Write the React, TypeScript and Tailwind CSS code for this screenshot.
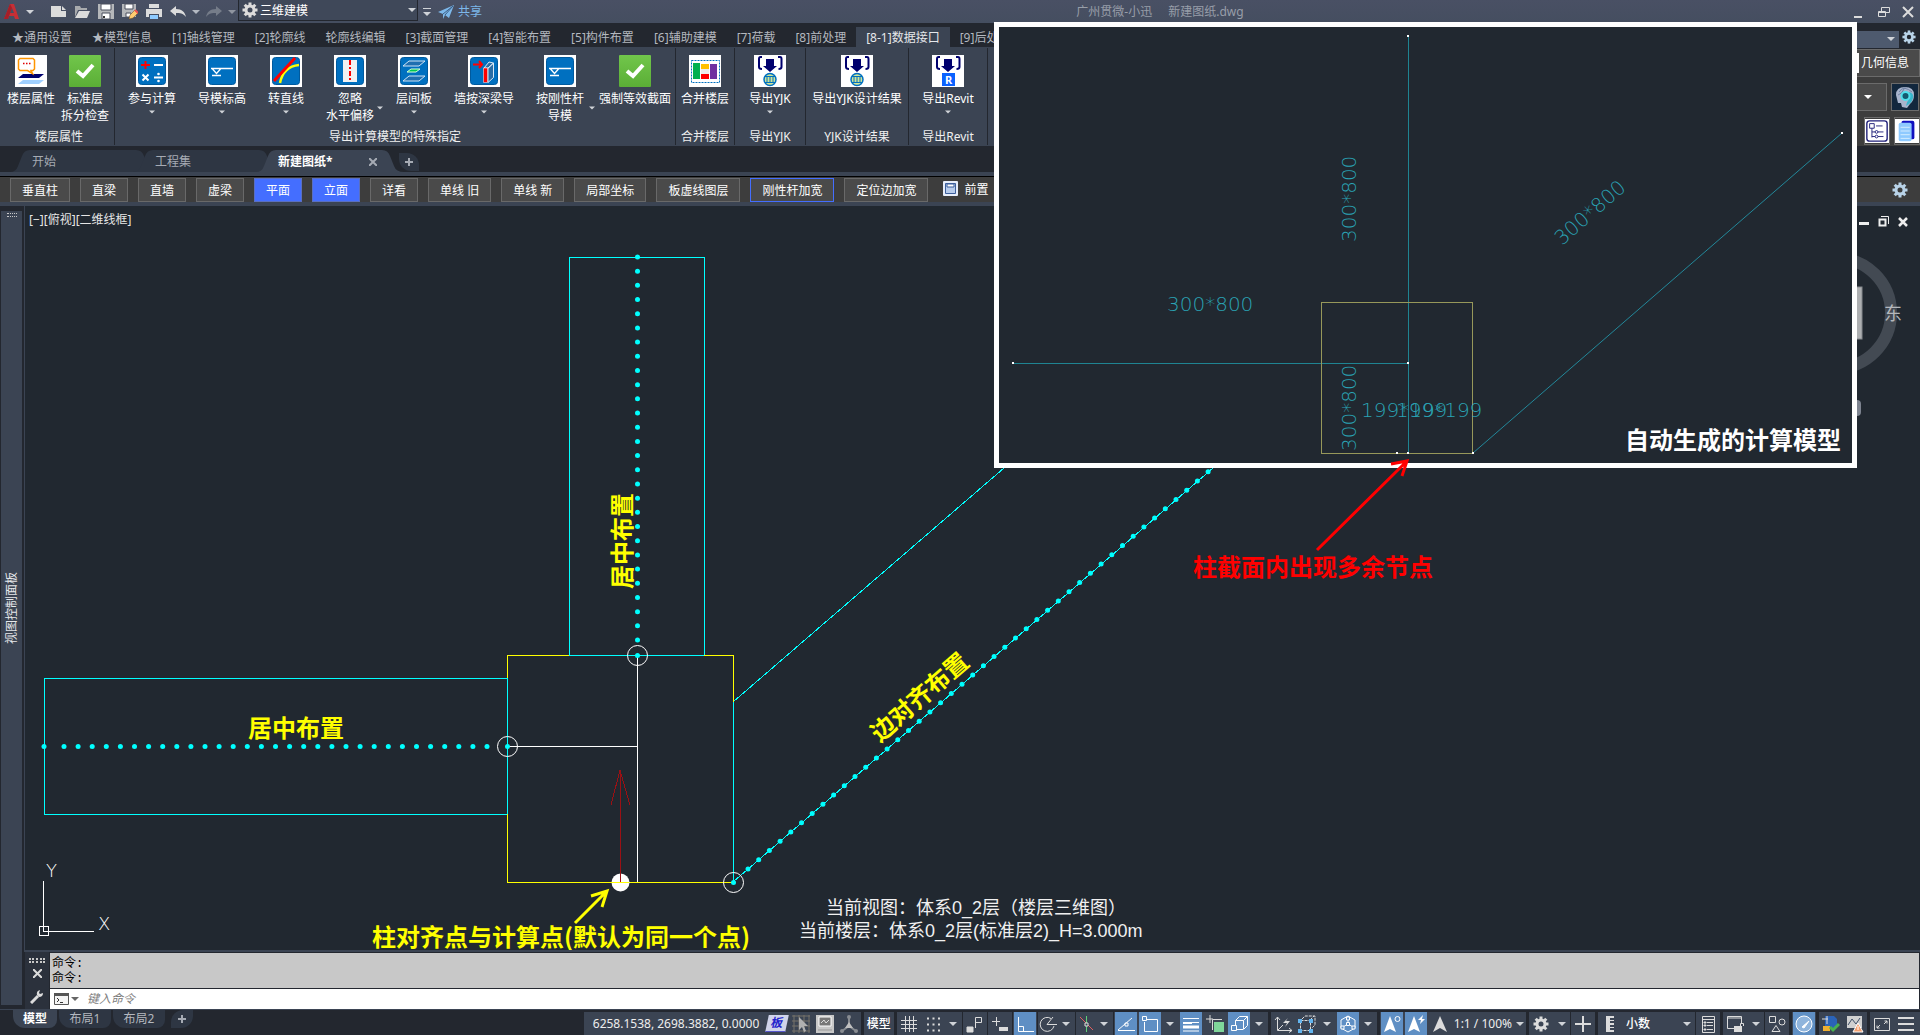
import type { ReactNode } from "react";
import { clsx } from "clsx";

const SANS = "font-['Noto_Sans','Noto_Sans_CJK_SC',sans-serif]";

interface RibbonButtonData {
  label: string[];
  icon: ReactNode;
  width: string;
  menu?: boolean;
}

interface RibbonPanelData {
  title: string;
  buttons: RibbonButtonData[];
}

interface ToolButtonData {
  label: string;
  active?: boolean;
  outlined?: boolean;
}

function Caret({ className = "border-t-[#d0d3d8]" }: { className?: string }) {
  return (
    <span
      aria-hidden="true"
      className={clsx("inline-block size-0 border-x-4 border-t-4 border-x-transparent", className)}
    />
  );
}

/* ---------- Icons ---------- */

const gearTeeth = [0, 45, 90, 135, 180, 225, 270, 315];

function Gear({ className, fill = "#dcdcdc" }: { className?: string; fill?: string }) {
  return (
    <svg viewBox="0 0 16 16" className={className} aria-hidden="true">
      <g fill={fill}>
        {gearTeeth.map((a) => (
          <rect key={a} x="6.5" y="0.5" width="3" height="4" transform={`rotate(${a} 8 8)`} />
        ))}
      </g>
      <circle cx="8" cy="8" r="4" fill="none" stroke={fill} strokeWidth="3" />
    </svg>
  );
}

function BlueTile({ children }: { children: ReactNode }) {
  return (
    <svg viewBox="0 0 32 32" className="size-8 bg-white" aria-hidden="true">
      <rect x="2.5" y="2.5" width="27" height="27" rx="3" fill="#0070c0" stroke="#005a9e" />
      {children}
    </svg>
  );
}

const checkIcon = (
  <svg viewBox="0 0 32 32" className="size-8" aria-hidden="true">
    <defs>
      <linearGradient id="check" x1="0" y1="0" x2="0" y2="1">
        <stop offset="0" stopColor="#71c64b" />
        <stop offset="1" stopColor="#5bae36" />
      </linearGradient>
    </defs>
    <rect width="32" height="32" rx="1" fill="url(#check)" />
    <path d="M8 16l6 5L24 10" fill="none" stroke="#fff" strokeWidth="4" />
  </svg>
);

const floorIcon = (
  <svg viewBox="0 0 32 32" className="size-8 bg-white" aria-hidden="true">
    <path d="M8 19h21l-5 4H3z" fill="#00006e" />
    <path d="M8 25h21l-5 4H3z" fill="#a0d0ff" />
    <path d="M5 3.500h13l1.500 1.500v9l-1.500 1.500h-2l1.500 3-5-3H5L3.500 14V5z" fill="#fff" stroke="#ff9500" strokeWidth="1.500" />
    <path d="M8 8.500h1.500M11 8.500h1.500M14 8.500h1.500" stroke="#e00000" strokeWidth="1.500" />
  </svg>
);

const calcIcon = (
  <BlueTile>
    <path d="M5 10h9M9.500 6v8" stroke="#ff0000" strokeWidth="2" />
    <path d="M18 10h9M18 22.500h9M6.500 19.500l6 6M12.500 19.500l-6 6" stroke="#fff" strokeWidth="2" />
    <circle cx="22.500" cy="19" r="1.300" fill="#fff" />
    <circle cx="22.500" cy="26" r="1.300" fill="#fff" />
  </BlueTile>
);

const elevationIcon = (
  <BlueTile>
    <path d="M5 13.500h22M6.500 14l4 4.500 4-4.500M6 20.500h9" fill="none" stroke="#fff" strokeWidth="1.300" />
  </BlueTile>
);

const straightIcon = (
  <BlueTile>
    <path d="M10 28C12 18 18 11 29 10" fill="none" stroke="#ffff00" strokeWidth="2.500" />
    <path d="M4 26L25 3" stroke="#ff0000" strokeWidth="3" />
  </BlueTile>
);

const offsetIcon = (
  <BlueTile>
    <path d="M9 5h14v22H9z" fill="#f2f2f2" />
    <path d="M16 5v22" stroke="#ff0000" strokeWidth="2" strokeDasharray="5 2 2 2" />
  </BlueTile>
);

const slabIcon = (
  <BlueTile>
    <path d="M11 6h16l-6 5H5zM11 21h16l-6 5H5z" fill="#1f6fb0" stroke="#cfe4f5" />
    <path d="M13 14h9l-4 3H9z" fill="#00c853" stroke="#d9ffd9" />
  </BlueTile>
);

const deepBeamIcon = (
  <BlueTile>
    <path d="M5 9.500h9M11 6l3 3.500-3 3.500" fill="none" stroke="#ff0000" strokeWidth="2" />
    <path d="M20 13v14.500l5.500-5V8zM16 13l5-6 4.500 1-5 5z" fill="#2b6ea5" stroke="#d9e8f5" />
    <path d="M15.500 13h4v14.500h-4z" fill="#ff0000" stroke="#fff" strokeWidth="0.500" />
  </BlueTile>
);

const mergeIcon = (
  <svg viewBox="0 0 32 32" className="size-8 bg-white" aria-hidden="true">
    <rect x="2.500" y="5.500" width="28" height="22" fill="none" stroke="#0070c0" strokeDasharray="2 1" />
    <path d="M4 8h7v16H4z" fill="#00b050" />
    <path d="M12 9h8v5h-8z" fill="#ffc000" />
    <path d="M12 14h8v5h-8z" fill="#eee" />
    <path d="M12 19h8v5h-8z" fill="#ff0000" />
    <path d="M21 9h7v15h-7z" fill="#7030a0" />
  </svg>
);

function ExportIcon({ revit }: { revit?: boolean }) {
  return (
    <svg viewBox="0 0 32 32" className="size-8 bg-white" aria-hidden="true">
      <path d="M8 2H6.500Q5 2 5 4v8q0 2 3 2M24 2h2q1.500 0 1.500 2v8q0 2-3 2" fill="none" stroke="#00006e" strokeWidth="2" />
      <path d="M12 4h8v7h3l-7 6-7-6h3z" fill="#00006e" />
      {revit ? (
        <>
          <rect x="10" y="18" width="13" height="13" fill="#0a62ff" />
          <text x="16.500" y="28.500" textAnchor="middle" fontSize="11" fontWeight="700" fill="#fff">
            R
          </text>
        </>
      ) : (
        <>
          <circle cx="16" cy="24.500" r="6" fill="#cfe59a" stroke="#0070c0" strokeWidth="1.500" />
          <path d="M11 21.500h10M11 27.500h10M13 21v7M16 21v7M19 21v7" stroke="#0070c0" />
        </>
      )}
    </svg>
  );
}

/* ---------- Title bar ---------- */

const quickTools: { label: string; art: ReactNode }[] = [
  { label: "新建", art: <path d="M1 3h10v5h5v6H1zM12 3l4 4h-4z" fill="#dcdcdc" /> },
  {
    label: "打开",
    art: (
      <>
        <path d="M1 3h5l1 2h6v2H4l-3 7z" fill="#a9abae" />
        <path d="M5 8h11l-3 7H1z" fill="#dcdcdc" />
      </>
    ),
  },
  {
    label: "保存",
    art: (
      <>
        <path d="M0 1h16v15H0z" fill="#b5b7ba" />
        <path d="M3 1h10v6H3zM4 10h8v6H4z" fill="#fff" stroke="#4a4f5c" />
        <path d="M5 13h2v2H5z" fill="#333" />
      </>
    ),
  },
  {
    label: "另存为",
    art: (
      <>
        <path d="M0 1h14v13H0z" fill="#b5b7ba" />
        <path d="M3 1h8v5H3zM4 10h5v4H4z" fill="#fff" stroke="#4a4f5c" />
        <path d="M7 16l1-4 5-5 3 3-5 5z" fill="#ffcc70" stroke="#6e4a20" strokeWidth="0.500" />
        <path d="M13 7l3 3" stroke="#f05050" strokeWidth="2" />
      </>
    ),
  },
  {
    label: "打印",
    art: (
      <>
        <path d="M3 1h10v4H3zM0 6h16v8h-3v-3H3v3H0z" fill="#dcdcdc" />
        <path d="M4 12h8v4H4z" fill="#8fcbff" />
      </>
    ),
  },
];

function QuickButton({ label, children }: { label: string; children: ReactNode }) {
  return (
    <button type="button" aria-label={label} className="flex size-6 items-center justify-center">
      <svg viewBox="0 0 16 17" className="h-[17px] w-4" aria-hidden="true">
        {children}
      </svg>
    </button>
  );
}

function TitleBar() {
  return (
    <header className="flex h-[23px] shrink-0 items-center bg-gradient-to-b from-[#495064] to-[#454e60]">
      <button type="button" aria-label="应用程序菜单" className="flex h-full w-[46px] items-center gap-1.5 pl-1">
        <svg viewBox="0 0 16 17" className="h-[17px] w-4" aria-hidden="true">
          <path d="M0 16L6 1h4l5 15h-4l-1-3H5l-1 3zM6 10h4L8 5z" fill="#c62f35" />
          <path d="M5 13L8 5 6 1 0 16h4z" fill="#a51f28" />
        </svg>
        <Caret />
      </button>
      {quickTools.map((t) => (
        <QuickButton key={t.label} label={t.label}>
          {t.art}
        </QuickButton>
      ))}
      <QuickButton label="放弃">
        <path d="M0 8l6-5v3c6 0 9 3 10 8-3-4-6-4-10-4v3z" fill="#dcdcdc" />
      </QuickButton>
      <span className="flex w-3 justify-center">
        <Caret className="border-t-[#b4b9c2]" />
      </span>
      <QuickButton label="重做">
        <path d="M16 8l-6-5v3C4 6 1 9 0 14c3-4 6-4 10-4v3z" fill="#757c89" />
      </QuickButton>
      <span className="flex w-3 justify-center">
        <Caret className="border-t-[#8f95a0]" />
      </span>
      <div className="flex h-[21px] w-[180px] items-center self-start border-x border-b border-[#23272f] bg-[#3f4859] pr-px pl-[3px]">
        <Gear className="size-4" />
        <select
          aria-label="工作空间"
          className="h-5 min-w-0 flex-1 appearance-none bg-transparent pt-0.5 pl-0.5 text-xs text-white outline-none"
        >
          <option>三维建模</option>
        </select>
        <Caret />
      </div>
      <button type="button" aria-label="自定义快速访问工具栏" className="flex w-[18px] flex-col items-center gap-[3px]">
        <span className="h-px w-2 bg-[#d0d3d8]" />
        <Caret />
      </button>
      <button type="button" className="ml-0.5 flex items-center gap-1 text-xs text-[#7db8ea]">
        <svg viewBox="0 0 16 14" className="h-3.5 w-4" aria-hidden="true">
          <path d="M0 7L16 0l-5 13-4-3-2 4V9z" fill="#7db8ea" />
          <path d="M5 9L15 1 7 10" stroke="#3d5f86" fill="none" />
        </svg>
        共享
      </button>
      <p className="flex flex-1 justify-center gap-4 pr-4 text-xs text-[#989ea9]">
        <span>广州贯微-小迅</span>
        <span>新建图纸.dwg</span>
      </p>
      <div className="flex items-center gap-3 pr-1.5">
        <button type="button" aria-label="最小化" className="flex h-4 w-3 items-end">
          <span className="mb-0.5 h-0.5 w-2 bg-[#dcdcdc]" />
        </button>
        <button type="button" aria-label="还原">
          <svg viewBox="0 0 12 12" className="size-3" fill="none" stroke="#dcdcdc" aria-hidden="true">
            <path d="M3.500 5V1.500h8v5H8M.500 5.500h7v5h-7zM.500 6.500h7" />
          </svg>
        </button>
        <button type="button" aria-label="关闭">
          <svg viewBox="0 0 12 12" className="size-3" stroke="#dcdcdc" strokeWidth="2" aria-hidden="true">
            <path d="M1 1l10 10M11 1L1 11" />
          </svg>
        </button>
      </div>
    </header>
  );
}

/* ---------- Ribbon ---------- */

const ribbonTabs = [
  "★通用设置",
  "★模型信息",
  "[1]轴线管理",
  "[2]轮廓线",
  "轮廓线编辑",
  "[3]截面管理",
  "[4]智能布置",
  "[5]构件布置",
  "[6]辅助建模",
  "[7]荷载",
  "[8]前处理",
  "[8-1]数据接口",
  "[9]后处理",
];

const ribbonPanels: RibbonPanelData[] = [
  {
    title: "楼层属性",
    buttons: [
      { label: ["楼层属性"], icon: floorIcon, width: "w-[52px]" },
      { label: ["标准层", "拆分检查"], icon: checkIcon, width: "w-14" },
    ],
  },
  {
    title: "导出计算模型的特殊指定",
    buttons: [
      { label: ["参与计算"], icon: calcIcon, width: "w-[72px]", menu: true },
      { label: ["导模标高"], icon: elevationIcon, width: "w-[68px]", menu: true },
      { label: ["转直线"], icon: straightIcon, width: "w-[60px]", menu: true },
      { label: ["忽略", "水平偏移"], icon: offsetIcon, width: "w-[68px]", menu: true },
      { label: ["层间板"], icon: slabIcon, width: "w-[60px]", menu: true },
      { label: ["墙按深梁导"], icon: deepBeamIcon, width: "w-20", menu: true },
      { label: ["按刚性杆", "导模"], icon: elevationIcon, width: "w-[72px]", menu: true },
      { label: ["强制等效截面"], icon: checkIcon, width: "w-[78px]" },
    ],
  },
  { title: "合并楼层", buttons: [{ label: ["合并楼层"], icon: mergeIcon, width: "w-14" }] },
  { title: "导出YJK", buttons: [{ label: ["导出YJK"], icon: <ExportIcon />, width: "w-[68px]", menu: true }] },
  { title: "YJK设计结果", buttons: [{ label: ["导出YJK设计结果"], icon: <ExportIcon />, width: "w-[100px]" }] },
  { title: "导出Revit", buttons: [{ label: ["导出Revit"], icon: <ExportIcon revit />, width: "w-[76px]", menu: true }] },
];

function RibbonButton({ label, icon, width, menu }: RibbonButtonData) {
  const twoLines = label.length > 1;
  return (
    <button
      type="button"
      className={clsx("relative flex flex-col items-center text-xs leading-[17px] whitespace-nowrap text-white", width)}
    >
      {icon}
      <span className="mt-[3px]">{label[0]}</span>
      {twoLines && <span>{label[1]}</span>}
      {menu && !twoLines && <Caret className="mt-[3px] scale-75 border-t-[#d0d3d8]" />}
      {menu && twoLines && <Caret className="absolute top-[51px] right-0 scale-75 border-t-[#d0d3d8]" />}
    </button>
  );
}

function Ribbon() {
  return (
    <div className="flex min-w-0 flex-1 flex-col">
      <nav className="flex h-6 items-end overflow-hidden bg-[#23272f] pl-0.5">
        {ribbonTabs.map((tab) => (
          <button
            key={tab}
            type="button"
            className={clsx(
              "h-5 shrink-0 px-[10px] text-xs leading-[21px] whitespace-nowrap",
              tab === "[8-1]数据接口" ? "bg-[#3b4453] text-[#e6e8eb]" : "text-[#b4b8bf]",
            )}
          >
            {tab}
          </button>
        ))}
      </nav>
      <div className="flex h-[99px] bg-[#3b4453] pt-px pl-1">
        {ribbonPanels.map((panel) => (
          <section
            key={panel.title}
            className="mb-px flex flex-col justify-between border-r border-[#23272f] px-px pt-[7px]"
          >
            <div className="flex">
              {panel.buttons.map((button) => (
                <RibbonButton key={button.label.join()} {...button} />
              ))}
            </div>
            <h2 className="text-center text-xs leading-4 text-[#f0f0f0]">{panel.title}</h2>
          </section>
        ))}
      </div>
    </div>
  );
}

function SidePalette() {
  return (
    <aside className="flex w-20 shrink-0 flex-col bg-[#3d3d3d]">
      <div className="flex h-[26px] items-center gap-[3px] bg-[#23272f] pt-1.5 pr-1">
        <button type="button" aria-label="搜索选项" className="flex h-[17px] flex-1 items-center justify-end bg-[#4e5a6e] pr-1">
          <Caret />
        </button>
        <Gear className="mb-1 size-3.5" fill="#b9d3e8" />
      </div>
      <div className="flex flex-col gap-1.5">
        <div className="flex h-7 items-center border-y border-r border-[#6b6b6b] bg-[#4a4a4a]">
          <input aria-label="构件编号" type="text" className="h-5 w-[19px] bg-white" />
          <button type="button" className="flex-1 pl-0.5 text-left text-xs whitespace-nowrap text-white">
            几何信息
          </button>
        </div>
        <div className="flex h-7 justify-between pr-px">
          <button
            type="button"
            aria-label="选项"
            className="flex w-[47px] items-center justify-end border border-[#6b6b6b] bg-[#4a4a4a] pr-3.5"
          >
            <Caret className="border-t-white" />
          </button>
          <button type="button" aria-label="智能助手" className="border border-[#6b6b6b]">
            <svg viewBox="0 0 26 26" className="size-[26px] bg-[#12273d]" aria-hidden="true">
              <path d="M4 11q0-8 9-8 9 0 9 8 0 6-4 9l-3 4-5-1-1-4H6l-1-4z" fill="#a8b4cc" />
              <path d="M7 8q2-4 7-4M6 11q4-1 6-6M12 4q5 1 8 4" fill="none" stroke="#6f83a5" />
              <path d="M17 8q5 1 4 6-1 4-4 6l-3 2q1-5 4-8z" fill="#39b5cc" />
              <circle cx="13.500" cy="12" r="4" fill="#155a70" stroke="#4fe0ec" strokeWidth="2" />
            </svg>
          </button>
        </div>
        <div className="flex h-7 justify-end gap-1">
          <button type="button" aria-label="列表设置" className="flex w-[26px] items-center justify-center border border-[#6b6b6b]">
            <svg viewBox="0 0 26 26" className="size-6 bg-white" fill="none" stroke="#20207a" aria-hidden="true">
              <rect x="2" y="2" width="22" height="22" rx="3" strokeWidth="1.500" />
              <path d="M5 5h5v5H5zM12 7.500h7M7.500 10v10M7.500 14H11M14 14h6M7.500 19H11M14 19h6" />
              <circle cx="12.500" cy="14" r="1.500" />
              <circle cx="12.500" cy="19" r="1.500" />
            </svg>
          </button>
          <button type="button" aria-label="文档" className="flex w-[26px] items-center justify-center border border-[#6b6b6b]">
            <svg viewBox="0 0 26 26" className="size-6 bg-white" aria-hidden="true">
              <rect x="7" y="2" width="14" height="20" rx="2" fill="#1010c0" />
              <rect x="4" y="4" width="14" height="20" rx="2" fill="#8fcaff" />
              <path d="M6 9h10M6 13h10M6 17h10M6 21h10" stroke="#d9efff" />
            </svg>
          </button>
        </div>
      </div>
    </aside>
  );
}

/* ---------- File tabs and tool strip ---------- */

function FileTab({ label, active }: { label: string; active?: boolean }) {
  return (
    <div className={clsx("relative w-[123px] px-2.5", active ? "z-10" : "z-0")}>
      <svg
        viewBox="0 0 148 22"
        className={clsx("absolute bottom-0 -left-3 h-[22px] w-[148px]", active ? "fill-[#3b4453]" : "fill-[#2e3643]")}
        aria-hidden="true"
      >
        <path d="M0 22q6 0 8-6l4-10q2-6 8-6h106q6 0 8 6l4 10q2 6 10 6z" />
      </svg>
      <div className="relative flex h-full items-center justify-between pt-0.5">
        <button type="button" className={clsx("text-xs", active ? "font-bold text-white" : "text-[#a6abb4]")}>
          {label}
        </button>
        {active && (
          <button type="button" aria-label={`关闭 ${label}`} className="mr-1">
            <svg viewBox="0 0 8 8" className="size-2" stroke="#a6abb4" strokeWidth="2" aria-hidden="true">
              <path d="M0 0l8 8M8 0L0 8" />
            </svg>
          </button>
        )}
      </div>
    </div>
  );
}

function FileTabs() {
  return (
    <div className="h-[30px] shrink-0 border-b-4 border-[#3b4453] bg-[#23272f]">
      <nav className="flex h-full pt-1 pl-[22px]">
        <FileTab label="开始" />
        <FileTab label="工程集" />
        <FileTab label="新建图纸*" active />
        <button
          type="button"
          aria-label="新建选项卡"
          className="mt-0.5 ml-2 flex h-[18px] w-5 items-center justify-center self-center rounded-tr-xl rounded-bl-xl bg-[#2e3643]"
        >
          <svg viewBox="0 0 8 8" className="size-2" stroke="#a6abb4" strokeWidth="2" aria-hidden="true">
            <path d="M4 0v8M0 4h8" />
          </svg>
        </button>
      </nav>
    </div>
  );
}

const toolButtons: ToolButtonData[] = [
  { label: "垂直柱" },
  { label: "直梁" },
  { label: "直墙" },
  { label: "虚梁" },
  { label: "平面", active: true },
  { label: "立面", active: true },
  { label: "详看" },
  { label: "单线 旧" },
  { label: "单线 新" },
  { label: "局部坐标" },
  { label: "板虚线图层" },
  { label: "刚性杆加宽", outlined: true },
  { label: "定位边加宽" },
];

function ToolStrip() {
  return (
    <div className="flex h-[30px] shrink-0 items-start gap-[10px] border-t border-b-4 border-t-black border-b-[#3b4453] bg-[#3d3d3d] pt-px pr-3 pl-[10px]">
      {toolButtons.map((tool) => (
        <button
          key={tool.label}
          type="button"
          className={clsx(
            "h-6 shrink-0 border px-[11px] pt-px text-xs whitespace-nowrap text-white",
            tool.active ? "border-[#5a6fc0] bg-[#446eff]" : "bg-[#4a4a4a]",
            tool.outlined && "border-[#446eff]",
            !tool.active && !tool.outlined && "border-[#696969]",
          )}
        >
          {tool.label}
        </button>
      ))}
      <button type="button" className="ml-[5px] flex h-6 items-center gap-1.5 text-xs whitespace-nowrap text-white">
        <svg viewBox="0 0 15 15" className="mb-1 size-[15px]" aria-hidden="true">
          <rect width="15" height="15" rx="1" fill="#e8eefa" />
          <path d="M2.500 2.500h10v10h-10z" fill="#b8ccec" stroke="#3c5f9c" />
          <path d="M4 3h7v3H4z" fill="#fff" stroke="#3c5f9c" />
        </svg>
        前置
      </button>
      <button type="button" aria-label="设置" className="mt-1 ml-auto">
        <Gear className="size-4" fill="#b9d3e8" />
      </button>
    </div>
  );
}

/* ---------- Drawing ---------- */

const verticalDots = Array.from({ length: 28 }, (_, i) => 257 + (i * 383) / 27);
const horizontalDots = [44, ...Array.from({ length: 31 }, (_, i) => 64 + (i * 423) / 30)];
const diagonalDots = Array.from({ length: 44 }, (_, i) => ({
  x: 748 + i * 10.7,
  y: 869 - i * 9.24,
}));

function DrawingCanvas() {
  return (
    <svg className="absolute inset-0 h-full w-full" aria-label="结构平面图">
      <g transform="translate(-25 -206)" fill="none">
        <g stroke="#00ffff" shapeRendering="crispEdges">
          <path d="M569 655V257h135v398M507 678H44v136h463" />
          <path d="M733 702l271-234M733 882l480-414" />
        </g>
        <rect x="507" y="655" width="226" height="227" stroke="#ffff00" shapeRendering="crispEdges" />
        <path d="M569 655h135M507 678v136M733 702v180" stroke="#00ffff" shapeRendering="crispEdges" />
        <path d="M637 655v227M507 746h130" stroke="#ffffff" shapeRendering="crispEdges" />

        <g fill="#00ffff">
          {verticalDots.map((y) => (
            <circle key={y} cx="637.500" cy={y} r="2.500" />
          ))}
          {horizontalDots.map((x) => (
            <circle key={x} cx={x} cy="746.500" r="2.500" />
          ))}
          {diagonalDots.map((p) => (
            <circle key={p.x} cx={p.x} cy={p.y} r="2.500" />
          ))}
          <circle cx="637.500" cy="655.500" r="2.500" />
          <circle cx="507.500" cy="746.500" r="2.500" />
          <circle cx="733.500" cy="882.500" r="2.500" />
        </g>
        <g stroke="#ffffff">
          <circle cx="637.500" cy="655.500" r="10" />
          <circle cx="507.500" cy="746.500" r="10" />
          <circle cx="733.500" cy="882.500" r="10" />
        </g>

        {/* column anchor */}
        <circle cx="620.500" cy="882.500" r="9" fill="#ffffff" />
        <path d="M611 882.500h18" stroke="#ffff00" />
        <path d="M620 882V770M620 770l-9 35M620 770l10 35" stroke="#9a1014" shapeRendering="crispEdges" />
        <path d="M575 923l31-31M591 896l16-5-5 16" stroke="#ffff00" strokeWidth="3" />

        <g fill="#ffff00" fontSize="24" className="font-['Noto_Sans_CJK_SC',sans-serif] font-bold">
          <text x="248" y="737">居中布置</text>
          <text transform="translate(631 589) rotate(-90)">居中布置</text>
          <text transform="translate(880 743) rotate(-41)">边对齐布置</text>
          <text x="372" y="946">柱对齐点与计算点(默认为同一个点)</text>
        </g>

        <g fill="#f0f0f0" fontSize="18" className="font-['Liberation_Sans','Noto_Sans_CJK_SC',sans-serif]">
          <text x="826" y="914">当前视图：体系0_2层（楼层三维图）</text>
          <text x="799" y="937">当前楼层：体系0_2层(标准层2)_H=3.000m</text>
        </g>

        {/* ucs */}
        <g stroke="#ffffff" shapeRendering="crispEdges">
          <path d="M43 881v50h51M39 926h9v9h-9z" />
        </g>
        <g fill="#ffffff" fontSize="18" className="font-['DejaVu_Sans',sans-serif] font-extralight">
          <text x="46" y="877">Y</text>
          <text x="98" y="930">X</text>
        </g>
      </g>
    </svg>
  );
}

function ViewCube() {
  return (
    <div className="absolute top-[46px] right-[18px] flex flex-col items-end" aria-label="导航">
      <svg viewBox="0 0 130 170" className="h-[170px] w-[130px]" aria-hidden="true">
        <circle cx="64" cy="61" r="55" fill="none" stroke="#434a53" strokeWidth="12" />
        <rect x="38" y="35" width="52" height="52" fill="#aeb0b2" stroke="#85888c" />
        <rect x="70" y="148" width="19" height="16" rx="4" fill="#7e8490" />
        <text x="112" y="68" fontSize="18" fill="#b4b7bb" className="font-['Noto_Sans_CJK_SC',sans-serif]">
          东
        </text>
      </svg>
    </div>
  );
}

function Viewport() {
  return (
    <main className="relative min-w-0 flex-1 overflow-hidden bg-[#212830]">
      <DrawingCanvas />
      <p className="absolute top-1.5 left-1 text-xs text-[#e6e6e6]">[−][俯视][二维线框]</p>
      <div className="absolute top-[10px] right-3 flex items-center gap-[9px] text-white">
        <button type="button" aria-label="最小化视口" className="flex h-[11px] items-end pb-0.5">
          <span className="h-[3px] w-[10px] bg-[#eeeeee]" />
        </button>
        <button type="button" aria-label="还原视口">
          <svg viewBox="0 0 11 11" className="size-[11px]" fill="none" stroke="#eeeeee" aria-hidden="true">
            <path d="M3 .5h7.500V8" />
            <path d="M1.500 3.500h6v6h-6z" strokeWidth="2" />
          </svg>
        </button>
        <button type="button" aria-label="关闭视口">
          <svg viewBox="0 0 10 10" className="size-[10px]" stroke="#eeeeee" strokeWidth="2.500" aria-hidden="true">
            <path d="M1 1l8 8M9 1L1 9" />
          </svg>
        </button>
      </div>
      <ViewCube />
    </main>
  );
}

function ModelInset() {
  return (
    <figure className="absolute top-[22px] right-[63px] left-[994px] z-20 h-[446px] border-5 border-white bg-[#212830]">
      <svg className="h-full w-full overflow-visible" aria-label="计算模型">
        <g transform="translate(-999 -27)" fill="none">
          <path d="M1408 35v418M1013 363h395" stroke="#1f8492" shapeRendering="crispEdges" />
          <path d="M1473 453l369-320" stroke="#23889a" />
          <rect x="1321" y="302" width="151" height="151" stroke="#97985a" shapeRendering="crispEdges" />
          <path
            d="M1407 35h2v2h-2zM1012 362h2v2h-2zM1407 362h2v2h-2zM1841 132h2v2h-2zM1407 452h2v2h-2zM1396 452h2v2h-2zM1472 452h2v2h-2z"
            fill="#ffffff"
          />
          <g fill="#2aa3b4" fontSize="20" className="font-['DejaVu_Sans',sans-serif] font-extralight">
            <text x="1167" y="311">300*800</text>
            <text transform="translate(1356 242) rotate(-90)">300*800</text>
            <text transform="translate(1356 451) rotate(-90)">300*800</text>
            <text transform="translate(1562 246) rotate(-41)">300*800</text>
            <text x="1361" y="417">199*199</text>
            <text x="1396" y="417">199*199</text>
          </g>
          <g fontSize="24" className="font-['Noto_Sans_CJK_SC',sans-serif] font-bold">
            <text x="1625" y="449" fill="#ffffff">
              自动生成的计算模型
            </text>
            <text x="1193" y="576" fill="#ff0000">
              柱截面内出现多余节点
            </text>
          </g>
          <path d="M1317 550l89-88M1391 464l16-3-5 15" stroke="#ff0000" strokeWidth="3" />
        </g>
      </svg>
    </figure>
  );
}

/* ---------- Command line ---------- */

function CommandLine() {
  return (
    <section className="flex h-[59px] shrink-0 border-t-2 border-[#3b4453] bg-[#23272f] pl-px">
      <div className="flex w-6 flex-col items-center gap-1.5 bg-[#2b313c] pt-1.5">
        <span aria-hidden="true" className="h-[5px] w-4 border-y-2 border-dotted border-[#c8c8c8]" />
        <button type="button" aria-label="关闭命令行">
          <svg viewBox="0 0 9 9" className="size-[9px]" stroke="#dcdcdc" strokeWidth="2" aria-hidden="true">
            <path d="M0 0l9 9M9 0L0 9" />
          </svg>
        </button>
        <button type="button" aria-label="自定义" className="mt-1.5">
          <svg viewBox="0 0 14 14" className="size-3.5" aria-hidden="true">
            <path d="M1 13l7-7" stroke="#dcdcdc" strokeWidth="3" />
            <path d="M13 3l-3 1-1-1 1-3q-4 1-3 5l2 2q4 0 4-4z" fill="#dcdcdc" />
          </svg>
        </button>
      </div>
      <div className="flex min-w-0 flex-1 flex-col pt-px pr-px pl-px">
        <div className="h-[35px] bg-[#c8c8c8] pt-1 pl-0.5 font-['Liberation_Mono','Noto_Sans_CJK_SC',monospace] text-xs leading-[15px] text-black">
          <p>命令:</p>
          <p>命令:</p>
        </div>
        <div className="mt-px flex flex-1 items-center bg-white pl-1">
          <svg viewBox="0 0 15 12" className="h-3 w-[15px] shrink-0" aria-hidden="true">
            <path d="M.500 .500h14v11H.500z" fill="#f4f4f4" stroke="#555" />
            <path d="M0 0h15v3H0z" fill="#555" />
            <path d="M3 5l2 2-2 2M6 9.500h3" fill="none" stroke="#333" />
          </svg>
          <Caret className="mx-0.5 border-t-[#666666]" />
          <input
            aria-label="命令"
            type="text"
            placeholder="键入命令"
            className="ml-1.5 w-full bg-transparent text-xs text-black italic outline-none placeholder:text-[#7d7d7d]"
          />
        </div>
      </div>
    </section>
  );
}

/* ---------- Status bar ---------- */

function StatusIcon({
  label,
  on,
  narrow,
  children,
}: {
  label: string;
  on?: boolean;
  narrow?: boolean;
  children: ReactNode;
}) {
  return (
    <button
      type="button"
      aria-label={label}
      aria-pressed={on}
      className={clsx(
        "flex h-full shrink-0 items-center justify-center",
        on && "mx-px w-[22px] bg-[#5f8fc4]",
        !on && (narrow ? "w-5" : "w-6"),
      )}
    >
      <svg viewBox="0 0 18 18" className="size-[18px]" fill="none" stroke={on ? "#ffffff" : "#dcdcdc"} aria-hidden="true">
        {children}
      </svg>
    </button>
  );
}

function StatusMenu({ label }: { label: string }) {
  return (
    <button type="button" aria-label={label} className="flex h-full w-[17px] shrink-0 items-center justify-center">
      <Caret />
    </button>
  );
}

function Gap({ thin }: { thin?: boolean }) {
  return <span aria-hidden="true" className={clsx("h-full shrink-0 bg-[#23272f]", thin ? "w-px" : "w-[3px]")} />;
}

const layoutTabs = ["模型", "布局1", "布局2"];

function StatusBar() {
  return (
    <footer className="flex h-[26px] shrink-0 justify-between overflow-hidden border-t border-[#3b4453] bg-[#23272f]">
      <nav className="flex h-[18px] gap-0.5 pl-[13px]">
        {layoutTabs.map((tab, i) => (
          <button
            key={tab}
            type="button"
            className={clsx(
              "rounded-br-lg rounded-bl-xl text-xs leading-[18px]",
              i === 0 ? "w-11 bg-[#3b4453] font-bold text-white" : "w-[52px] bg-[#2e3643] text-[#b4b8bf]",
            )}
          >
            {tab}
          </button>
        ))}
        <button
          type="button"
          aria-label="新建布局"
          className="ml-1 flex w-[22px] items-center justify-center rounded-tl-xl rounded-br-xl bg-[#2e3643]"
        >
          <svg viewBox="0 0 8 8" className="size-2" stroke="#a6abb4" strokeWidth="2" aria-hidden="true">
            <path d="M4 0v8M0 4h8" />
          </svg>
        </button>
      </nav>
      <div className="mt-0.5 flex items-center bg-[#3b4453] pr-0.5 text-xs text-[#eeeeee]">
        <output className="w-[181px] pl-[9px] whitespace-nowrap">6258.1538, 2698.3882, 0.0000</output>
        <button type="button" className="flex w-6 shrink-0 items-center justify-center">
          <span className="-skew-x-12 border-b border-[#5555cc] bg-[#d0d4ea] px-1 text-xs leading-4 font-bold text-[#2222cc]">
            板
          </span>
        </button>
        <StatusIcon label="选择">
          <path d="M0 1h18M0 6h18M0 11h18M0 16h18M2 0v18M7 0v18M12 0v18M17 0v18" stroke="#77736a" />
          <path d="M7 2v13l3-3 2 5 2-1-2-5h4z" fill="#b0b0b0" stroke="none" />
        </StatusIcon>
        <StatusIcon label="面板">
          <path d="M0 0h18v18H0z" fill="#c8c8c8" stroke="none" />
          <path d="M3 2h12v9H3z" fill="#777" stroke="#fff" />
          <path d="M5 8l3-3 2 3 3-3" />
          <path d="M2 15h14" stroke="#999" />
        </StatusIcon>
        <StatusIcon label="节点">
          <path d="M9 3v8M9 11l-7 5M9 11l7 5" stroke="#888c92" strokeWidth="2" />
          <path d="M5 13l4-6 4 6z" fill="#c0c0c0" stroke="none" />
          <circle cx="9" cy="2" r="2" fill="#888c92" stroke="none" />
          <circle cx="2" cy="16" r="2" fill="#888c92" stroke="none" />
          <circle cx="16" cy="16" r="2" fill="#888c92" stroke="none" />
        </StatusIcon>
        <Gap />
        <button type="button" className="w-[30px] shrink-0 font-medium text-white">
          模型
        </button>
        <Gap />
        <StatusIcon label="栅格">
          <path d="M1 5.500h16M1 9.500h16M1 13.500h16M5.500 1v16M9.500 1v16M13.500 1v16" />
        </StatusIcon>
        <StatusIcon label="捕捉">
          <path d="M3 3.500h14M3 9.500h14M3 15.500h14" strokeWidth="2" strokeDasharray="2 3.500" />
        </StatusIcon>
        <StatusMenu label="捕捉选项" />
        <Gap thin />
        <StatusIcon label="推断约束">
          <path d="M1 12h6v5H1z" fill="#dcdcdc" />
          <path d="M9.500 13V2.500h6v5h-6" />
        </StatusIcon>
        <Gap thin />
        <StatusIcon label="动态输入">
          <path d="M1 6.500h8M5.500 2v9" />
          <path d="M8 12h9v4H8z" fill="#dcdcdc" stroke="none" />
        </StatusIcon>
        <Gap thin />
        <StatusIcon label="正交" on>
          <path d="M2.500 2v14.500H18M2.500 11.500h5v5" />
        </StatusIcon>
        <Gap thin />
        <StatusIcon label="极轴追踪" narrow>
          <path d="M12 3.500A7 7 0 1 0 15 11M8 9.500h10M8 9.500L14 2" />
        </StatusIcon>
        <StatusMenu label="极轴选项" />
        <Gap thin />
        <StatusIcon label="等轴测草图" narrow>
          <path d="M9.500 1v16" stroke="#5fd07a" />
          <path d="M3 2l13 13" stroke="#e06060" />
          <path d="M8 8h3v3H8z" fill="#3b4453" />
        </StatusIcon>
        <StatusMenu label="等轴测选项" />
        <Gap thin />
        <StatusIcon label="对象捕捉追踪" on>
          <path d="M1 15.500h17M1 15L15 3M8 8h3v3H8z" />
        </StatusIcon>
        <StatusIcon label="二维对象捕捉" on>
          <path d="M6 4.500h10.500v12h-13V7M1.500 1.500h4v4h-4z" />
        </StatusIcon>
        <StatusMenu label="对象捕捉选项" />
        <StatusIcon label="线宽" on>
          <path d="M1 3.500h16" />
          <path d="M1 8h9" strokeWidth="2" />
          <path d="M10 7.500h7M1 16h16" />
          <path d="M1 12h16" strokeWidth="3" />
        </StatusIcon>
        <StatusIcon label="选择循环">
          <path d="M0 4h7M4 0v8M16 4.500H6.500V15" />
          <path d="M8 7h10v10H8z" fill="#7fd69a" stroke="none" />
        </StatusIcon>
        <StatusIcon label="三维对象捕捉" on>
          <path d="M5.500 10V5.500h8V14M5.500 5.500l4-4h8l-4 4M17.500 1.500v9l-4 4M7 14.500h6M1.500 10.500h5v5h-5z" />
        </StatusIcon>
        <StatusMenu label="三维捕捉选项" />
        <Gap />
        <StatusIcon label="动态 UCS">
          <path d="M3.500 2v13.500H18M1 5l2.500-3L6 5M15 13l3 2.500-3 2M4 15l5-5" />
          <path d="M14 3l-5 5h4l-2 4 5-6h-4z" fill="#dcdcdc" stroke="none" />
        </StatusIcon>
        <StatusIcon label="选择过滤">
          <path d="M2.500 5.500h10v10h-10zM4 4l3-3h10v9l-3 3M12 5l4-4" strokeDasharray="3 1" />
          <path d="M0 4h4v4H0zM11 4h4v4h-4zM0 14h4v4H0zM11 14h4v4h-4z" fill="#62b5f0" stroke="none" />
        </StatusIcon>
        <StatusMenu label="过滤选项" />
        <StatusIcon label="小控件" on>
          <path d="M9 1l7 4v8l-7 4-7-4V5zM9 1v8M9 9l7 4M9 9l-7 4" />
          <path d="M7.500 7.500h3v3h-3zM7.500 2h3v3h-3zM2 11h3v3H2zM13 11h3v3h-3z" fill="#5f8fc4" />
        </StatusIcon>
        <StatusMenu label="小控件选项" />
        <Gap />
        <StatusIcon label="注释可见性" on>
          <path d="M7 1l6 16-6-3-6 3z" fill="#fff" stroke="none" />
          <circle cx="14.500" cy="4" r="2.500" />
        </StatusIcon>
        <StatusIcon label="自动缩放" on>
          <path d="M7 1l6 16-6-3-6 3z" fill="#fff" stroke="none" />
          <path d="M16 0l-5 5h3l-1 4 5-5h-3z" fill="#fff" stroke="none" />
        </StatusIcon>
        <StatusIcon label="注释比例">
          <path d="M9 1l7 16-7-4-7 4z" fill="#dcdcdc" stroke="none" />
        </StatusIcon>
        <button type="button" className="flex h-full shrink-0 items-center gap-1 px-0.5 whitespace-nowrap">
          1:1 / 100%
          <Caret />
        </button>
        <Gap />
        <button type="button" aria-label="切换工作空间" className="flex h-full w-6 shrink-0 items-center justify-center">
          <Gear className="size-4" />
        </button>
        <StatusMenu label="工作空间选项" />
        <Gap thin />
        <StatusIcon label="注释监视器">
          <path d="M1 9h16M9 1v16" strokeWidth="2" />
        </StatusIcon>
        <Gap />
        <StatusIcon label="单位">
          <path d="M5 1h8v2H9v2h4v1H9v2h4v2H9v2h4v1H9v2h4v2H5z" fill="#dcdcdc" stroke="none" />
        </StatusIcon>
        <div className="flex h-full shrink-0 items-center">
          <select
            aria-label="图形单位"
            className="w-14 appearance-none bg-transparent pl-1 font-medium text-white outline-none"
          >
            <option>小数</option>
          </select>
          <span className="flex w-[17px] justify-center">
            <Caret />
          </span>
        </div>
        <Gap thin />
        <StatusIcon label="快捷特性">
          <path d="M3.500 1.500h12v16h-12zM3 4.500h12M8 7.500h6M8 10.500h6M8 14.500h6" />
          <path d="M5 7h2v1H5zM5 10h2v1H5zM5 14h2v1H5z" fill="#dcdcdc" />
        </StatusIcon>
        <Gap />
        <StatusIcon label="锁定用户界面">
          <path d="M8 13.500H1.500v-12h14V9M1 3h15" />
          <path d="M8 11h8v6H8z" fill="#dcdcdc" stroke="none" />
          <path d="M14.500 11V8.500h3V11" />
        </StatusIcon>
        <StatusMenu label="锁定选项" />
        <Gap thin />
        <StatusIcon label="隔离对象">
          <path d="M1.500 1.500h6v6h-6zM4 16.500l4-6 4 6z" />
          <circle cx="14" cy="7" r="3" />
        </StatusIcon>
        <Gap />
        <StatusIcon label="硬件加速" on>
          <circle cx="9" cy="9" r="8" fill="#8fb4dc" />
          <path d="M7 12l7-6-5 7z" fill="#fff" />
        </StatusIcon>
        <Gap />
        <StatusIcon label="标准检查">
          <path d="M3 1h9l3 3v9H3z" fill="#2a63b8" stroke="none" />
          <path d="M0 4h6M5 1v8" />
          <path d="M1 11h7v5H1z" fill="#f0b030" stroke="none" />
          <path d="M8 12l3 3 6-6" stroke="#48b050" strokeWidth="3" />
        </StatusIcon>
        <StatusIcon label="性能监视">
          <path d="M1 1h15v12H1z" fill="#d0d0d0" stroke="none" />
          <path d="M2 10l4-6 4 5 4-6" stroke="#405068" />
          <path d="M12 8l5 9H7z" fill="#f4a070" stroke="#fff" />
          <path d="M12 11v4" stroke="#fff" />
        </StatusIcon>
        <Gap />
        <StatusIcon label="全屏显示">
          <path d="M1.500 3.500h15v12h-15zM4 13l3-3M4 10.500V13h2.500M14 6l-3 3M11.500 6H14v2.500" />
        </StatusIcon>
        <StatusIcon label="自定义">
          <path d="M1 3h16M1 9h16M1 15h16" strokeWidth="2" />
        </StatusIcon>
      </div>
    </footer>
  );
}

export default function App() {
  return (
    <div className={clsx("relative flex h-screen flex-col overflow-hidden bg-[#23272f]", SANS)}>
      <TitleBar />
      <div className="flex shrink-0">
        <Ribbon />
        <SidePalette />
      </div>
      <FileTabs />
      <ToolStrip />
      <div className="flex min-h-0 flex-1">
        <aside className="flex w-6 shrink-0 pt-[5px] pr-0.5 pb-1 pl-px">
          <div className="relative flex flex-1 items-center justify-center bg-[#3b4453]">
            <span aria-hidden="true" className="absolute top-0.5 h-1 w-2.5 border-y border-dotted border-[#c8c8c8]" />
            <span className="rotate-180 text-xs leading-4 text-[#e6e8eb] [text-orientation:sideways] [writing-mode:vertical-rl]">
              视图控制面板
            </span>
          </div>
        </aside>
        <div className="flex min-w-0 flex-1 flex-col">
          <div className="flex min-h-0 flex-1 border-l border-[#3b4453]">
            <Viewport />
          </div>
          <CommandLine />
        </div>
      </div>
      <StatusBar />
      <ModelInset />
    </div>
  );
}
